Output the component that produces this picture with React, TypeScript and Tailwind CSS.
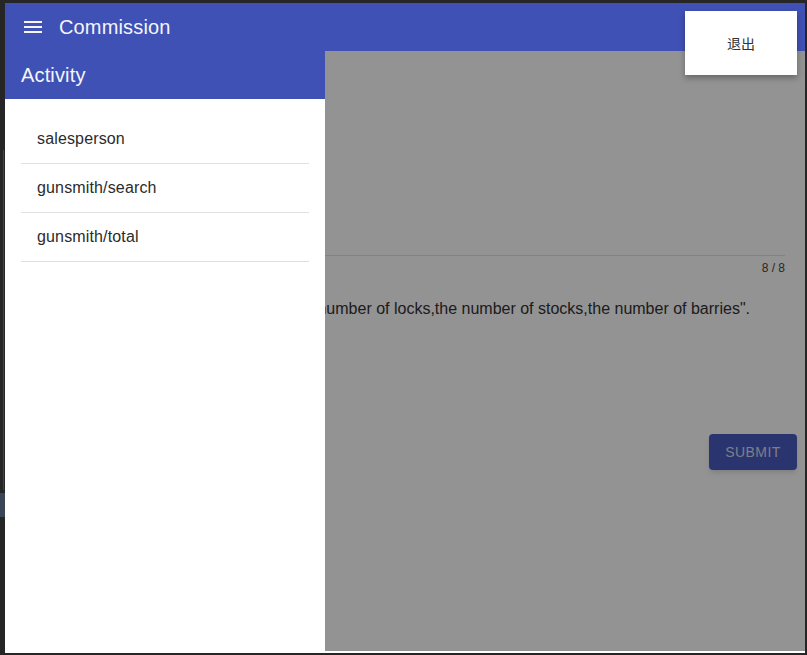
import { useState } from "react";

const activities = ["salesperson", "gunsmith/search", "gunsmith/total"];

function MenuIcon() {
  return (
    <svg width="24" height="24" viewBox="0 0 24 24" fill="currentColor">
      <path d="M3 18h18v-2H3v2zm0-5h18v-2H3v2zm0-7v2h18V6H3z" />
    </svg>
  );
}

export default function App() {
  const [active] = useState<string | null>(null);

  return (
    <div className="relative h-[655px] w-[807px] overflow-hidden bg-[#262626] pl-[5px] pt-[3px] font-['Liberation_Sans',Arial,sans-serif]">
      {/* desktop leftovers behind the window */}
      <div className="absolute left-[3px] top-[150px] h-[340px] w-px bg-[#444]" />
      <div className="absolute left-0 top-[493px] h-[24px] w-[5px] bg-[#3a4556]" />

      <div className="relative flex h-[650px] w-[800px] flex-col bg-white">
        {/* app bar */}
        <header className="relative z-20 flex h-12 shrink-0 items-center bg-[#3f51b5] pl-[16px] text-[#f4f5fb]">
          <button className="flex h-6 w-6 items-center justify-center">
            <MenuIcon />
          </button>
          <h1 className="ml-[14px] text-[20px] leading-6 tracking-[0.15px]">Commission</h1>
        </header>

        {/* page content, dimmed by the backdrop */}
        <main className="flex flex-1 flex-col px-[20px] pb-[2px] pr-[8px] text-[#212121]">
          <div className="mr-[12px] h-[205px] border-b border-[#e2e2e2]" />
          <div className="mr-[12px] mt-[4px] text-right text-xs leading-4 text-[#444]">8 / 8</div>
          <div className="mr-[47px] mt-[21px] flex justify-end whitespace-nowrap text-base leading-6 text-[#333]">
            Please input "the number of locks,the number of stocks,the number of barries".
          </div>
          <div className="mt-[113px] flex justify-end">
            <button className="h-9 w-[88px] rounded bg-[#4a5bc0] text-sm uppercase tracking-[0.4px] text-[#d8dcef] shadow-md">
              Submit
            </button>
          </div>
        </main>

        {/* backdrop */}
        <div className="absolute inset-x-0 bottom-[2px] top-12 z-10 bg-[rgba(0,0,0,0.424)]" />

        {/* drawer */}
        <aside className="absolute bottom-0 left-0 top-12 z-10 flex w-[320px] flex-col bg-white">
          <div className="flex h-12 shrink-0 items-center bg-[#3f51b5] px-4 text-[20px] tracking-[0.15px] text-[#f4f5fb]">
            Activity
          </div>
          <ul className="px-4 pt-4">
            {activities.map((a) => (
              <li
                key={a}
                className={
                  "flex h-[49px] items-center border-b border-[#e0e0e0] px-4 text-base tracking-[0.15px] text-[#2b2b2b]" +
                  (active === a ? " bg-gray-100" : "")
                }
              >
                {a}
              </li>
            ))}
          </ul>
        </aside>

        {/* logout popover */}
        <div className="absolute left-[680px] top-[8px] z-30 flex h-16 w-[112px] items-center justify-center bg-white font-['Noto_Sans_CJK_SC',sans-serif] text-sm text-[#333] shadow-[0_3px_6px_rgba(0,0,0,0.3)]">
          退出
        </div>
      </div>
    </div>
  );
}
